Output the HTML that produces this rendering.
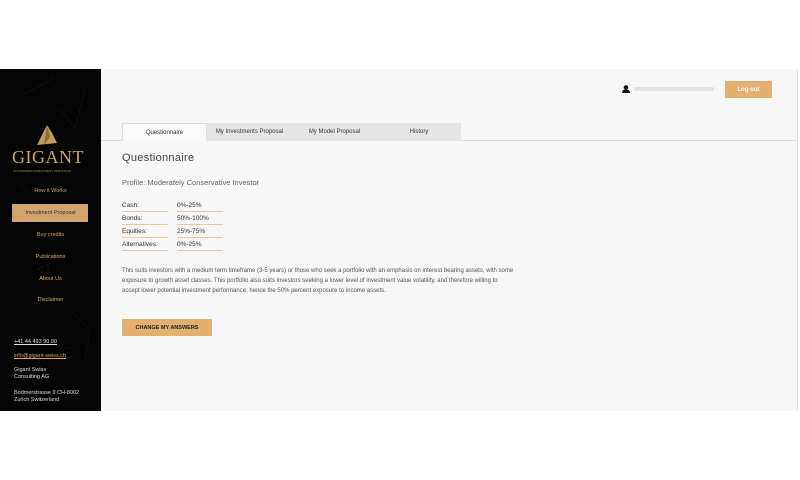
<!DOCTYPE html>
<html><head><meta charset="utf-8"><style>
*{margin:0;padding:0;box-sizing:border-box}
body{width:800px;height:480px;background:#fff;font-family:"Liberation Sans",sans-serif;position:relative;overflow:hidden}
.side{position:absolute;left:0;top:69px;width:101px;height:342px;background:#050505}
.main{position:absolute;left:101px;top:69px;width:697px;height:342px;background:#f7f7f7;border-right:1px solid #ddd}
.a{position:absolute;white-space:nowrap}
.nav{position:absolute;left:0;width:101px;text-align:center;color:#d6a865;font-size:5.5px}
.tab{position:absolute;top:54px;height:18px;background:#e6e6e6;font-size:6px;color:#333;text-align:center;line-height:18px}
.row{position:absolute;font-size:6.5px;color:#333;border-bottom:1px solid #e9c79a;height:12px;line-height:11px}
.p{position:absolute;left:21px;color:#555;white-space:nowrap}
.btn{position:absolute;background:#e3b06f;font-weight:bold;text-align:center;display:flex;align-items:center;justify-content:center}
</style></head><body>
<div class="side">
<svg width="101" height="342" style="position:absolute;left:0;top:0" stroke="#2e2414" stroke-width="0.4" fill="none">
<path d="M25 25 L55 8 M85 20 L75 60 L60 40 M20 115 L30 125 M38 200 L48 205 L48 195 Z M70 240 L90 262 L85 290 M40 270 L70 280"/>
</svg>
<svg width="30" height="22" style="position:absolute;left:35px;top:54px"><path d="M2 22 L12 2 L17 10 L22 20 Z" fill="#c49a5c"/><path d="M12 2 L15 14 L9 22Z" fill="#8a6a3a"/></svg>
<div class="a" style="left:12px;top:78px;font-family:'Liberation Serif',serif;font-size:18px;color:#c9a36a;letter-spacing:0.5px">GIGANT</div>
<div class="a" style="left:13px;top:100px;font-size:3px;color:#b08a55">CUSTOMIZED INVESTMENT PORTFOLIO</div>
<div class="nav" style="top:119px">How it Works</div>
<div style="position:absolute;left:12px;top:135px;width:76px;height:18px;background:#d3a56c"></div>
<div class="nav" style="top:141px;color:#333">Investment Proposal</div>
<div class="nav" style="top:163px">Buy credits</div>
<div class="nav" style="top:185px">Publications</div>
<div class="nav" style="top:207px">About Us</div>
<div class="nav" style="top:228px">Disclaimer</div>
<div class="a" style="left:14px;top:270px;font-size:5.5px;color:#ddd;text-decoration:underline">+41 44 493 90 90</div>
<div class="a" style="left:14px;top:284px;font-size:5.5px;color:#d6a865;text-decoration:underline">info@gigant-swiss.ch</div>
<div class="a" style="left:14px;top:298px;font-size:5.5px;color:#ddd;line-height:7px">Gigant Swiss<br>Consulting AG</div>
<div class="a" style="left:14px;top:321px;font-size:5.5px;color:#ddd;line-height:7px">Bodmerstrasse 9 CH-8002<br>Zurich Switzerland</div>
</div>
<div class="main">
<svg width="8" height="8" style="position:absolute;left:521px;top:16px"><circle cx="4" cy="2.5" r="2.3" fill="#111"/><path d="M0 8 Q0 4.5 4 4.5 Q8 4.5 8 8Z" fill="#111"/></svg>
<div style="position:absolute;left:533px;top:18px;width:80px;height:4px;background:#e2e2e2;border-radius:2px"></div>
<div class="btn" style="left:624px;top:12px;width:47px;height:17px;color:#fff;font-size:6px">Log out</div>
<div style="position:absolute;left:0;top:71px;width:697px;height:1px;background:#ddd"></div>
<div class="tab" style="left:21px;width:85px;background:#fafafa;border:1px solid #ddd;border-bottom:none">Questionnaire</div>
<div class="tab" style="left:106px;width:85px">My Investments Proposal</div>
<div class="tab" style="left:191px;width:85px">My Model Proposal</div>
<div class="tab" style="left:276px;width:84px">History</div>
<div class="a" style="left:21px;top:83px;font-size:11px;color:#444;letter-spacing:0.3px">Questionnaire</div>
<div class="a" style="left:21px;top:109px;font-size:7.5px;color:#666">Profile: Moderately Conservative Investor</div>
<div class="row" style="left:21px;top:131px;width:46px">Cash:</div><div class="row" style="left:76px;top:131px;width:46px">0%-25%</div>
<div class="row" style="left:21px;top:144px;width:46px">Bonds:</div><div class="row" style="left:76px;top:144px;width:46px">50%-100%</div>
<div class="row" style="left:21px;top:157px;width:46px">Equities:</div><div class="row" style="left:76px;top:157px;width:46px">25%-75%</div>
<div class="row" style="left:21px;top:170px;width:46px">Alternatives:</div><div class="row" style="left:76px;top:170px;width:46px">0%-25%</div>
<div class="p" style="top:197px;line-height:10px;font-size:6px">This suits investors with a medium term timeframe (3-5 years) or those who seek a portfolio with an emphasis on interest bearing assets, with some<br>exposure to growth asset classes. This portfolio also suits investors seeking a lower level of investment value volatility, and therefore willing to<br>accept lower potential investment performance, hence the 50% percent exposure to income assets.</div>
<div class="btn" style="left:21px;top:250px;width:90px;height:17px;color:#222;font-size:5.5px">CHANGE MY ANSWERS</div>
</div>
</body></html>
